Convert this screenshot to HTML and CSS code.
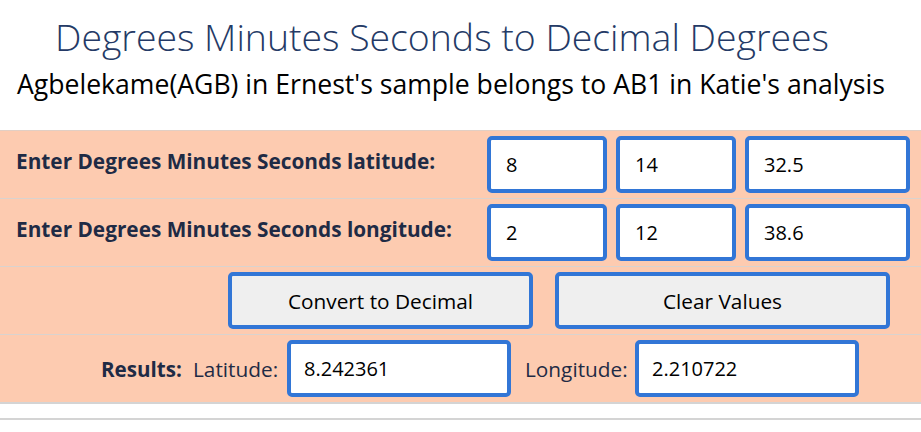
FILE: index.html
```html
<!DOCTYPE html>
<html>
<head>
<meta charset="utf-8">
<link rel="stylesheet" href="styles.css">
</head>
<body>
<h1 class="title">Degrees Minutes Seconds to Decimal Degrees</h1>
<p class="subtitle">Agbelekame(AGB) in Ernest's sample belongs to AB1 in Katie's analysis</p>
<div class="panel">
  <div class="row">
    <div class="label">Enter Degrees Minutes Seconds latitude:</div>
    <div class="inputs">
      <input class="box small" value="8">
      <input class="box small" value="14">
      <input class="box large" value="32.5">
    </div>
  </div>
  <div class="row">
    <div class="label">Enter Degrees Minutes Seconds longitude:</div>
    <div class="inputs">
      <input class="box small" value="2">
      <input class="box small" value="12">
      <input class="box large" value="38.6">
    </div>
  </div>
  <div class="row buttons">
    <button class="btn convert">Convert to Decimal</button>
    <button class="btn clear">Clear Values</button>
  </div>
  <div class="row results">
    <span class="res-label">Results:</span>
    <span class="res-name lat">Latitude:</span>
    <input class="box result" value="8.242361">
    <span class="res-name lon">Longitude:</span>
    <input class="box result" value="2.210722">
  </div>
</div>
<div class="footer"></div>
</body>
</html>
```
FILE: styles.css
```css
* { box-sizing: border-box; }
body {
  margin: 0;
  font-family: "Open Sans", "DejaVu Sans", sans-serif;
  background: #fff;
  color: #000;
}
.title {
  margin: 0;
  padding: 12px 0 0 55px;
  font-weight: 300;
  font-size: 37.4px;
  line-height: 50px;
  color: #243a66;
}
.subtitle {
  margin: 0;
  padding: 0 0 0 17px;
  font-size: 26.6px;
  line-height: 44px;
  height: 68px;
  color: #000;
}
.panel {
  background: #fdcbb0;
  border-top: 1px solid #e2cfc4;
  border-bottom: 2px solid #d4d4d4;
}
.row {
  display: flex;
  align-items: center;
  height: 68px;
  border-top: 1px solid #d9d3cf;
}
.row:first-child { border-top: none; height: 67px; }
.label {
  width: 487px;
  padding-left: 16px;
  padding-bottom: 8px;
  font-weight: 700;
  font-size: 20.8px;
  color: #1f2b45;
}
.inputs {
  display: flex;
  gap: 9px;
}
.box {
  height: 57px;
  border: 4px solid #3276d6;
  border-radius: 5px;
  background: #fff;
  font-family: "Open Sans", "DejaVu Sans", sans-serif;
  font-size: 20px;
  color: #000;
  padding: 0 0 0 15px;
  outline: none;
}
.small { width: 120px; }
.large { width: 165px; }
.buttons { padding-left: 228px; gap: 22px; }
.btn {
  height: 57px;
  border: 4px solid #3276d6;
  border-radius: 5px;
  background: #efefef;
  font-family: "Open Sans", "DejaVu Sans", sans-serif;
  font-size: 20.8px;
  color: #000;
}
.convert { width: 305px; }
.clear { width: 335px; }
.results { padding-left: 101px; }
.res-label {
  width: 92px;
  font-weight: 700;
  font-size: 20.6px;
  color: #1f2b45;
}
.res-name {
  font-size: 20.8px;
  color: #1f2b45;
}
.lat { width: 94px; }
.lon { width: 110px; margin-left: 14px; }
.result { width: 224px; padding-left: 13px; }
.footer {
  height: 16px;
  border-bottom: 2px solid #d4d4d4;
}
```
